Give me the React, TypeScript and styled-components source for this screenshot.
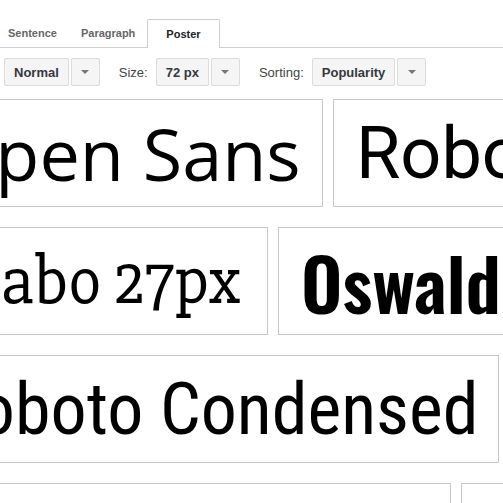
import React from "react";
import styled, { createGlobalStyle } from "styled-components";

const GlobalStyle = createGlobalStyle`
  html, body {
    margin: 0;
    padding: 0;
    background: #fff;
    overflow: hidden;
  }
  body {
    font-family: "Liberation Sans", Arial, sans-serif;
  }
`;

type CardSpec = {
  text: string;
  family: string;
  size: number;
  weight?: number;
  stretch?: string;
  width: number;
  align?: "center" | "start";
};

const rows: { offset: number; cards: CardSpec[] }[] = [
  {
    offset: -83,
    cards: [
      { text: "Open Sans", family: '"Open Sans", sans-serif', size: 72, width: 406 },
      { text: "Roboto", family: "Roboto, sans-serif", size: 72, width: 320, align: "start" },
    ],
  },
  {
    offset: -78,
    cards: [
      {
        text: "Slabo 27px",
        family: '"Slabo 27px", "DejaVu Serif Condensed", "DejaVu Serif", serif',
        size: 68,
        stretch: "condensed",
        width: 346,
      },
      {
        text: "Oswald",
        family: 'Oswald, "Roboto Condensed", "DejaVu Sans Condensed", sans-serif',
        size: 72,
        weight: 600,
        stretch: "condensed",
        width: 320,
        align: "start",
      },
    ],
  },
  {
    offset: -80,
    cards: [
      {
        text: "Roboto Condensed",
        family: '"Roboto Condensed", "DejaVu Sans Condensed", sans-serif',
        size: 72,
        stretch: "condensed",
        width: 579,
      },
    ],
  },
  {
    offset: -60,
    cards: [
      { text: "Lato", family: "Lato, sans-serif", size: 72, width: 511 },
      { text: "Montserrat", family: '"DejaVu Sans", sans-serif', size: 72, width: 300, align: "start" },
    ],
  },
];

const App = () => {
  return (
    <>
      <GlobalStyle />
      <Page>
        <TabBar>
          <Tab>Sentence</Tab>
          <Tab>Paragraph</Tab>
          <Tab $active>Poster</Tab>
        </TabBar>

        <Toolbar>
          <Select>
            <SelectButton>Normal</SelectButton>
            <ArrowButton>
              <Caret />
            </ArrowButton>
          </Select>

          <Label>Size:</Label>
          <Select>
            <SelectButton>72 px</SelectButton>
            <ArrowButton>
              <Caret />
            </ArrowButton>
          </Select>

          <Label>Sorting:</Label>
          <Select>
            <SelectButton>Popularity</SelectButton>
            <ArrowButton>
              <Caret />
            </ArrowButton>
          </Select>
        </Toolbar>

        <Cards>
          {rows.map((row, i) => (
            <Row key={i} $offset={row.offset}>
              {row.cards.map((card) => (
                <Card key={card.text} $width={card.width} $align={card.align || "center"}>
                  <Sample
                    $family={card.family}
                    $size={card.size}
                    $weight={card.weight || 400}
                    $stretch={card.stretch || "normal"}
                  >
                    {card.text}
                  </Sample>
                </Card>
              ))}
            </Row>
          ))}
        </Cards>
      </Page>
    </>
  );
};

// Styled components

const Page = styled.div`
  width: 503px;
  height: 503px;
  overflow: hidden;
`;

const TabBar = styled.div`
  display: flex;
  align-items: flex-end;
  height: 47px;
  margin-left: -4px;
  border-bottom: 1px solid #cfcfcf;
`;

const Tab = styled.div<{ $active?: boolean }>`
  box-sizing: border-box;
  height: ${(p) => (p.$active ? "29px" : "28px")};
  margin-bottom: ${(p) => (p.$active ? "-1px" : "0")};
  padding: 0 ${(p) => (p.$active ? "18px" : "12px")};
  display: flex;
  align-items: center;
  font-size: 11px;
  font-weight: bold;
  color: ${(p) => (p.$active ? "#222" : "#666")};
  background: #fff;
  border: ${(p) => (p.$active ? "1px solid #cfcfcf" : "none")};
  border-bottom: none;
  border-radius: 2px 2px 0 0;
`;

const Toolbar = styled.div`
  display: flex;
  align-items: center;
  margin-top: 10px;
  padding-left: 4px;
  height: 28px;
`;

const Select = styled.div`
  display: flex;
  gap: 2px;
`;

const SelectButton = styled.div`
  box-sizing: border-box;
  height: 28px;
  padding: 0 9px;
  display: flex;
  align-items: center;
  font-size: 13px;
  font-weight: bold;
  color: #36383d;
  background: #f5f5f5;
  border: 1px solid #dcdcdc;
  border-radius: 2px;
`;

const ArrowButton = styled(SelectButton)`
  width: 29px;
  padding: 0;
  justify-content: center;
`;

const Caret = styled.span`
  width: 0;
  height: 0;
  border-left: 4px solid transparent;
  border-right: 4px solid transparent;
  border-top: 4px solid #777;
`;

const Label = styled.span`
  font-size: 13px;
  color: #444;
  margin: 0 8px 0 19px;
`;

const Cards = styled.div`
  display: flex;
  flex-direction: column;
  gap: 20px;
  margin-top: 13px;
`;

const Row = styled.div<{ $offset: number }>`
  display: flex;
  gap: 10px;
  margin-left: ${(p) => p.$offset}px;
`;

const Card = styled.div<{ $width: number; $align: "center" | "start" }>`
  box-sizing: border-box;
  flex: 0 0 ${(p) => p.$width}px;
  width: ${(p) => p.$width}px;
  height: 108px;
  padding: 0 22px;
  display: flex;
  align-items: center;
  justify-content: ${(p) => (p.$align === "start" ? "flex-start" : "center")};
  background: #fff;
  border: 1px solid #c8c8c8;
  overflow: hidden;
`;

const Sample = styled.span<{ $family: string; $size: number; $weight: number; $stretch: string }>`
  font-family: ${(p) => p.$family};
  font-size: ${(p) => p.$size}px;
  font-weight: ${(p) => p.$weight};
  font-stretch: ${(p) => p.$stretch};
  color: #000;
  white-space: nowrap;
`;

export default App;
